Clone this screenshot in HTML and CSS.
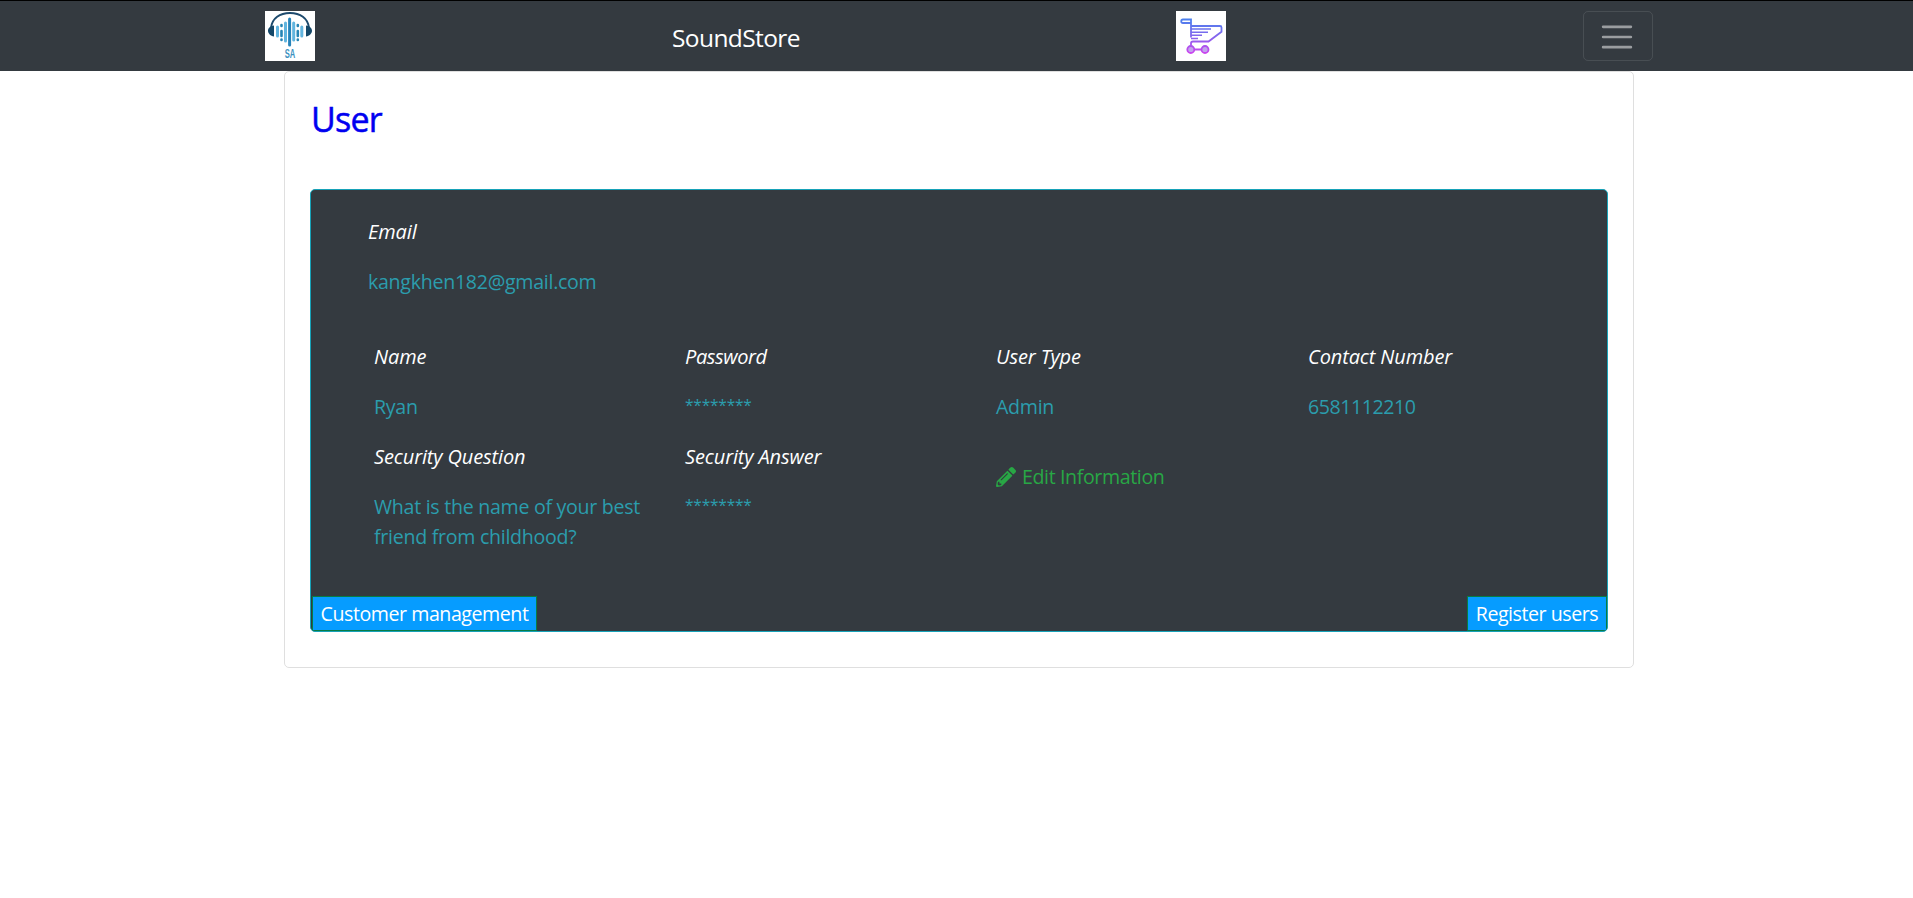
FILE: index.html
```html
<!DOCTYPE html>
<html lang="en">
<head>
<meta charset="utf-8">
<title>SoundStore</title>
<link rel="stylesheet" href="styles.css">
</head>
<body>
<nav class="navbar">
  <div class="navbar-inner">
    <svg class="logo" viewBox="0 0 50 50" role="img" aria-label="SA">
      <rect width="50" height="50" fill="#fff"/>
      <path d="M6 17C7 7 15 2 25 2s18 5 19 15" fill="none" stroke="#1d4a6d" stroke-width="2"/>
      <path d="M9 14.500v11C5.500 25 3 22.500 3 19.800s2.500-5 6-5.300zM41 14.500v11c3.500-.500 6-3 6-5.700s-2.500-5-6-5.300z" fill="#154869"/>
      <g fill="none" stroke-linecap="round">
        <path d="M12.500 16v9M20.500 12v18M28.700 12v17M36.800 16v9" stroke="#62b5df" stroke-width="3"/>
        <path d="M24.600 8v26" stroke="#2583ba" stroke-width="3"/>
        <path d="M16.500 20v5M32.800 20v5M16.500 14v1M32.800 14v1M16.500 28.500v.500M32.800 28.500v.500" stroke="#2785b5" stroke-width="2.600"/>
      </g>
      <text x="19.800" y="47.300" class="logo-text" textLength="10.500" lengthAdjust="spacingAndGlyphs">SA</text>
    </svg>
    <a class="brand">SoundStore</a>
    <svg class="cart" viewBox="0 0 50 50">
      <defs>
        <linearGradient id="cart-stroke" gradientUnits="userSpaceOnUse" x1="0" y1="8" x2="0" y2="43">
          <stop offset="0" stop-color="#4a80ed"/><stop offset=".5" stop-color="#8465ed"/><stop offset="1" stop-color="#cf42ee"/>
        </linearGradient>
      </defs>
      <rect width="50" height="50" fill="#fff"/>
      <g fill="none" stroke="url(#cart-stroke)" stroke-width="1.800">
        <path d="M15 12H7a1.700 1.700 0 0 1 0-3.500h8v18M15 12v3h29c1 0 1.500.5 1.500 1.500v4.200L32.500 30.500H17c-1.500 0-2 .7-2 1.700v2.500M18.500 38.500h7"/>
        <path d="M15 18h20M15 21.300h17M15 24.300h11M15 27.400h7" stroke-width="1.500"/>
        <circle cx="14.800" cy="38.500" r="3.500" fill="#c2a2ed"/>
        <circle cx="29" cy="38.500" r="3.500" fill="#c2a2ed"/>
      </g>
    </svg>
    <button class="toggler" aria-label="Menu">
      <svg viewBox="0 0 30 30"><path d="M4 7h22M4 15h22M4 23h22" stroke="#fff" stroke-opacity=".5" stroke-width="2" stroke-linecap="round" stroke-miterlimit="10"/></svg>
    </button>
  </div>
</nav>
<main class="card">
  <h3 class="card-title">User</h3>
  <section class="profile">
    <div class="email">
      <p class="label">Email</p>
      <p class="value">kangkhen182@gmail.com</p>
    </div>
    <div class="details">
      <div><p class="label">Name</p><p class="value">Ryan</p></div>
      <div><p class="label tight">Password</p><p class="value stars">********</p></div>
      <div><p class="label">User Type</p><p class="value">Admin</p></div>
      <div><p class="label">Contact Number</p><p class="value number">6581112210</p></div>
      <div><p class="label">Security Question</p><p class="value">What is the name of your best friend from childhood?</p></div>
      <div><p class="label">Security Answer</p><p class="value stars">********</p></div>
      <a class="edit">
        <svg viewBox="0 0 512 512"><path fill="currentColor" d="M497.900 142.100l-46.100 46.100c-4.700 4.700-12.300 4.700-17 0l-111-111c-4.700-4.700-4.700-12.300 0-17l46.100-46.100c18.700-18.700 49.100-18.700 67.900 0l60.100 60.100c18.800 18.700 18.800 49.100 0 67.900zM284.200 99.800L21.600 362.400.4 483.900c-2.900 16.400 11.400 30.600 27.800 27.800l121.500-21.300 262.600-262.600c4.700-4.700 4.700-12.300 0-17l-111-111c-4.800-4.700-12.400-4.700-17.100 0zM124.100 339.900c-5.500-5.500-5.500-14.300 0-19.800l154-154c5.500-5.500 14.300-5.500 19.800 0s5.500 14.300 0 19.800l-154 154c-5.500 5.500-14.300 5.500-19.800 0zM88 424h48v36.300l-64.500 11.300-31.100-31.100L51.700 376H88v48z"/></svg>
        <span>Edit Information</span>
      </a>
    </div>
    <div class="actions">
      <button class="action">Customer management</button>
      <button class="action register">Register users</button>
    </div>
  </section>
</main>
</body>
</html>
```
FILE: styles.css
```css
* { box-sizing: border-box; }
body {
  margin: 0;
  background: #fff;
  font-family: "Open Sans", "Noto Sans", sans-serif;
  font-size: 19.6px;
  line-height: 30px;
}
p, h3 { margin: 0; }
.navbar {
  height: 71px;
  background: #343a40;
  border-top: 1px solid #000;
  padding: 10px 260px 10px 265px;
}
.navbar-inner { display: flex; justify-content: space-between; align-items: center; }
.logo, .cart { width: 50px; height: 50px; display: block; }
.logo-text { font: 700 12px "Liberation Sans", sans-serif; fill: #3c91bf; }
.brand { color: #fff; font-size: 24.5px; letter-spacing: -0.6px; width: 131px; margin-right: 16px; padding-top: 3px; white-space: nowrap; }
.toggler {
  width: 70px;
  height: 50px;
  padding: 0;
  border: 1px solid rgba(255, 255, 255, .1);
  border-radius: 5px;
  background: transparent;
  display: flex;
  align-items: center;
  justify-content: center;
}
.toggler svg { width: 38px; height: 38px; flex: none; margin: 1px 2px 0 0; }
.card {
  width: 1350px;
  height: 597px;
  margin-left: 284px;
  padding: 25px;
  border: 1px solid #dfdfdf;
  border-radius: 5px;
}
.card-title {
  color: #0000f0;
  font-size: 34px;
  font-weight: 500;
  line-height: 42px;
  letter-spacing: -0.8px;
  margin: 1px 0 49px;
  padding-left: 1px;
  -webkit-text-stroke: .5px #0000f0;
}
.profile {
  height: 443px;
  display: flex;
  flex-direction: column;
  border: 1px solid #17a2b8;
  border-radius: 5px;
  background: #343a40;
  overflow: hidden;
}
.email { padding: 27px 0 0 57px; }
.label { color: #fff; font-size: 20px; font-style: italic; margin-bottom: 20px; letter-spacing: -0.12px; }
.tight { letter-spacing: -0.4px; }
.value { color: #2b9dad; margin-bottom: 20px; letter-spacing: -0.28px; }
.number { letter-spacing: -0.45px; }
.stars { font-size: 15.5px; line-height: 27px; margin-bottom: 23px; letter-spacing: -0.2px; }
.details {
  display: grid;
  grid-template-columns: 311px 311px 312px 1fr;
  padding: 25px 0 0 63px;
}
.details > div { padding-right: 30px; }
.edit { display: flex; align-items: center; gap: 6px; height: 30px; margin-top: 20px; color: #28a745; letter-spacing: -0.38px; }
.edit svg { width: 20px; height: 20px; }
.actions { margin-top: auto; display: flex; justify-content: space-between; padding-left: 1px; }
.action {
  width: 225px;
  height: 35px;
  padding: 1px 0 0;
  border: 1px solid #087c45;
  background: #069cff;
  color: #fff;
  font: inherit;
  letter-spacing: -0.45px;
  white-space: nowrap;
}
.register { width: 140px; }
```
